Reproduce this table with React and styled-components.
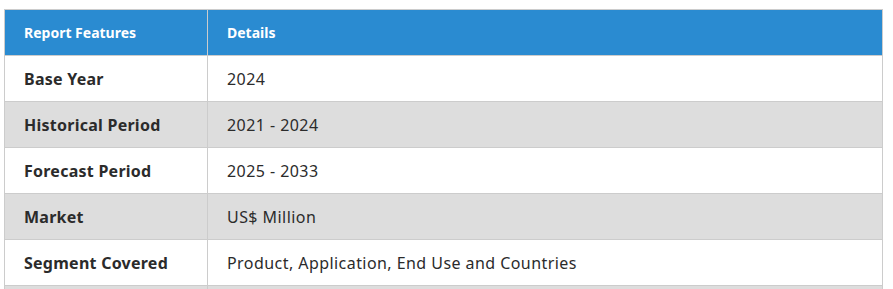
import React from "react"
import styled, { createGlobalStyle } from "styled-components"

const Global = createGlobalStyle`
  body {
    margin: 0;
    background: #fff;
    font-family: "Noto Sans", "Open Sans", sans-serif;
  }
`

const Wrap = styled.div`
  padding: 9px 10px 0 4px;
`

const Table = styled.table`
  width: 879px;
  border-collapse: collapse;
  border: 1px solid #cccccc;
  table-layout: fixed;
`

const Head = styled.th`
  background: #2a8bd1;
  color: #fff;
  font-size: 14px;
  font-weight: 700;
  text-align: left;
  height: 45px;
  padding: 0 19px;
  border: 1px solid #cccccc;
  width: ${(p) => p.$w || "auto"};
`

const Row = styled.tr`
  background: ${(p) => (p.$alt ? "#dddddd" : "#ffffff")};
`

const Cell = styled.td`
  height: 45px;
  padding: 0 19px;
  font-size: 16px;
  color: #2b2b2b;
  font-weight: ${(p) => (p.$bold ? 700 : 400)};
  letter-spacing: ${(p) => (p.$bold ? "0.25px" : "0.44px")};
  border: 1px solid #cccccc;
`

const rows = [
  ["Base Year", "2024"],
  ["Historical Period", "2021 - 2024"],
  ["Forecast Period", "2025 - 2033"],
  ["Market", "US$ Million"],
  ["Segment Covered", "Product, Application, End Use and Countries"],
  ["Regions Covered", "North America, Europe, Asia Pacific, Latin America, Middle East and Africa"],
]

export default function App() {
  return (
    <Wrap>
      <Global />
      <Table>
        <thead>
          <tr>
            <Head $w="164px">Report Features</Head>
            <Head>Details</Head>
          </tr>
        </thead>
        <tbody>
          {rows.map(([k, v], i) => (
            <Row key={k} $alt={i % 2 === 1}>
              <Cell $bold>{k}</Cell>
              <Cell>{v}</Cell>
            </Row>
          ))}
        </tbody>
      </Table>
    </Wrap>
  )
}
